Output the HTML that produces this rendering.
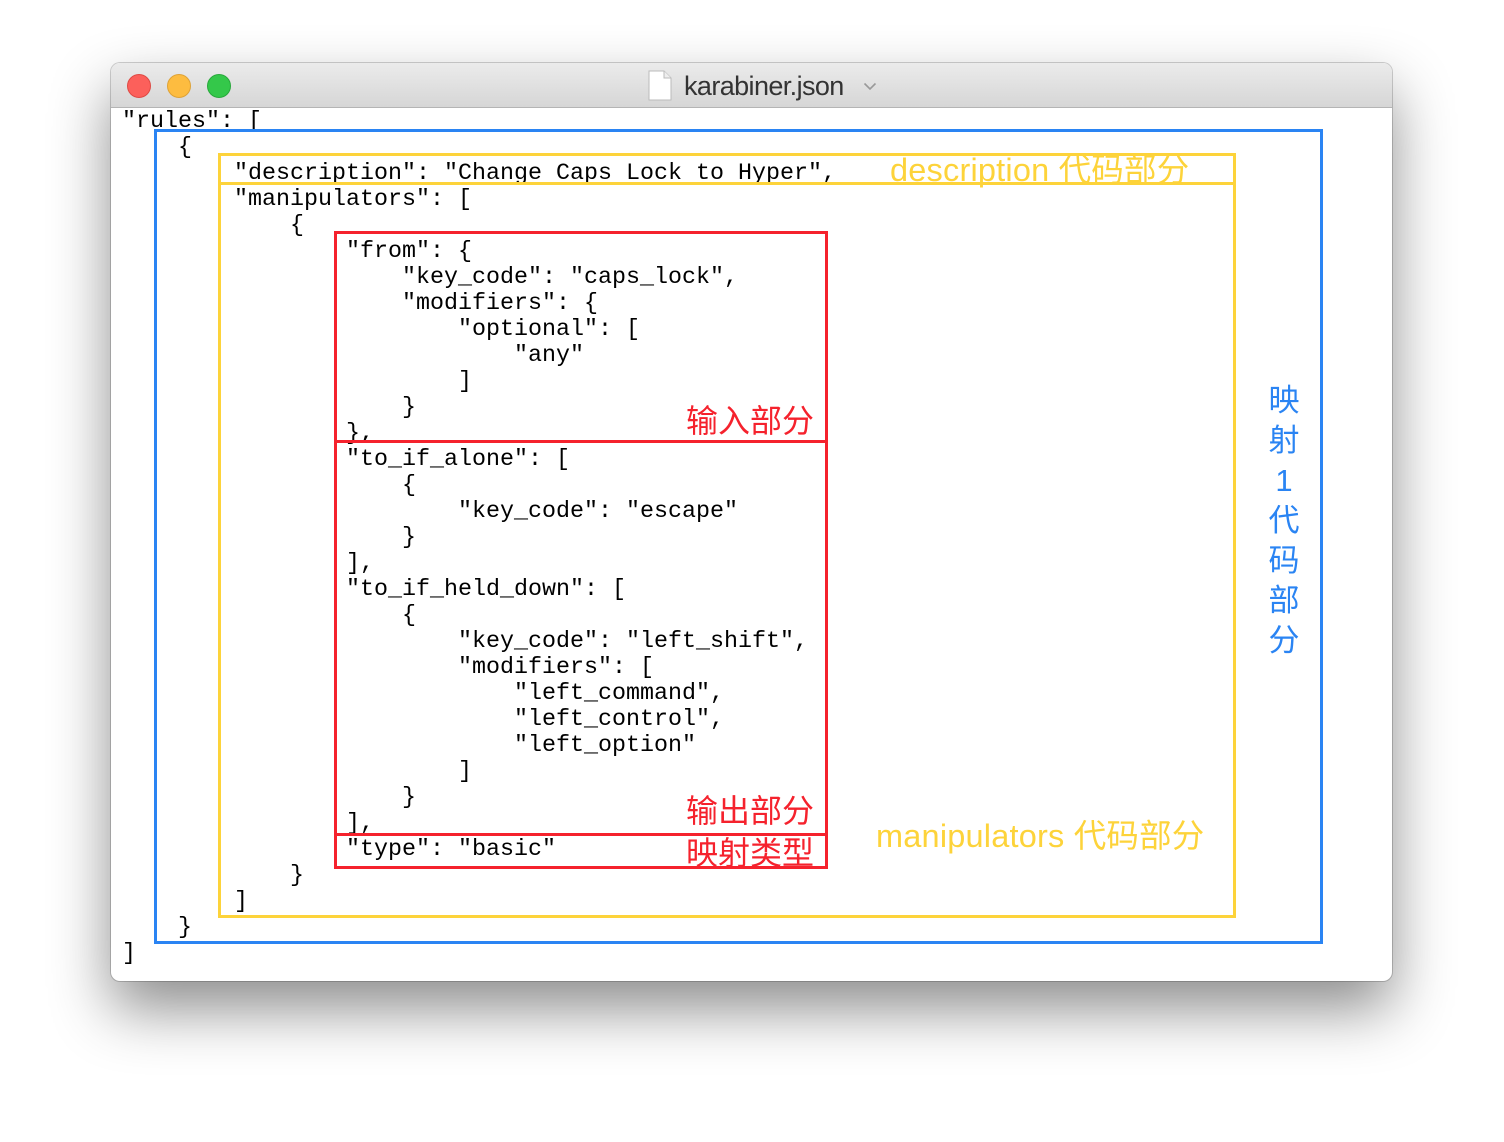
<!DOCTYPE html>
<html><head><meta charset="utf-8"><style>
html,body{margin:0;padding:0;background:#fff;width:1504px;height:1142px;overflow:hidden;position:relative}
.win{position:absolute;left:111px;top:63px;width:1281px;height:918px;background:#fff;border-radius:9px;box-shadow:0 28px 60px rgba(0,0,0,0.45),0 0 0 1px rgba(0,0,0,0.18);overflow:hidden}
.tb{position:absolute;left:0;top:0;width:100%;height:44px;background:linear-gradient(#ebebeb,#d6d6d6);border-bottom:1px solid #b4b4b4}
.dot{position:absolute;top:11px;width:24px;height:24px;border-radius:50%}
.title{position:absolute;left:573px;top:8px;font:27px "Liberation Sans",sans-serif;color:#333;letter-spacing:-0.6px}
pre{position:absolute;left:11px;top:46px;margin:0;font:23.33px/26px "Liberation Mono",monospace;color:#000}
.b{position:absolute;box-sizing:border-box}
.lab{position:absolute;font-family:"Liberation Sans","Noto Sans CJK SC",sans-serif;white-space:nowrap}
</style></head><body>
<div class="win">
 <div class="tb">
  <div class="dot" style="left:16px;background:#fc605b;border:1px solid #de4a44;box-sizing:border-box"></div>
  <div class="dot" style="left:56px;background:#fdbc40;border:1px solid #dea236;box-sizing:border-box"></div>
  <div class="dot" style="left:96px;background:#34c84a;border:1px solid #28a83b;box-sizing:border-box"></div>
  <svg style="position:absolute;left:537px;top:7px" width="24" height="31" viewBox="0 0 24 31"><path d="M1 1H16L23 8V30H1Z" fill="#fff" stroke="#bbb"/><path d="M16 1V8H23" fill="#eee" stroke="#bbb"/></svg>
  <div class="title">karabiner.json</div>
  <svg style="position:absolute;left:752px;top:19px" width="14" height="9" viewBox="0 0 14 9"><path d="M1.5 1.5L7 7L12.5 1.5" fill="none" stroke="#999" stroke-width="1.6"/></svg>
 </div>
<pre>"rules": [
    {
        "description": "Change Caps Lock to Hyper",
        "manipulators": [
            {
                "from": {
                    "key_code": "caps_lock",
                    "modifiers": {
                        "optional": [
                            "any"
                        ]
                    }
                },
                "to_if_alone": [
                    {
                        "key_code": "escape"
                    }
                ],
                "to_if_held_down": [
                    {
                        "key_code": "left_shift",
                        "modifiers": [
                            "left_command",
                            "left_control",
                            "left_option"
                        ]
                    }
                ],
                "type": "basic"
            }
        ]
    }
]</pre>
</div>
<div class="b" style="left:154px;top:129px;width:1169px;height:815px;border:3px solid #2a84f3"></div>
<div class="b" style="left:218px;top:153px;width:1018px;height:765px;border:3px solid #fdd33a"></div>
<div class="b" style="left:218px;top:182px;width:1018px;height:3px;background:#fdd33a"></div>
<div class="b" style="left:334px;top:231px;width:494px;height:638px;border:3px solid #f5222d"></div>
<div class="b" style="left:334px;top:440px;width:494px;height:3px;background:#f5222d"></div>
<div class="b" style="left:334px;top:833px;width:494px;height:3px;background:#f5222d"></div>
<div class="lab" style="left:890px;top:144px;font-size:32.5px;letter-spacing:0.2px;color:#fdd33a">description 代码部分</div>
<div class="lab" style="left:876px;top:810px;font-size:32.5px;letter-spacing:0.2px;color:#fdd33a">manipulators 代码部分</div>
<div class="lab" style="left:686px;top:396px;font-size:32px;color:#f5222d">输入部分</div>
<div class="lab" style="left:686px;top:786px;font-size:32px;color:#f5222d">输出部分</div>
<div class="lab" style="left:686px;top:828px;font-size:32px;color:#f5222d">映射类型</div>
<div class="lab" style="left:1268px;top:381px;font-size:31px;line-height:40px;color:#2a84f3;text-align:center;width:32px;white-space:normal">映<br>射<br>1<br>代<br>码<br>部<br>分</div>
</body></html>
